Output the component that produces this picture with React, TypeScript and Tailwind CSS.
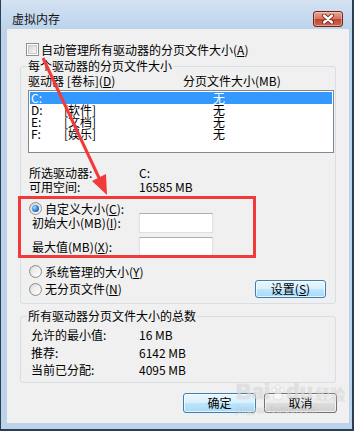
import React from 'react';

const font = "font-['Noto_Sans_CJK_SC',sans-serif]";

function Key({ k }: { k: string }) {
    return <span>(<span className="underline underline-offset-1">{k}</span>)</span>;
}

function Checkbox() {
    return (
        <span className="flex h-[13px] w-[13px] shrink-0 items-center justify-center border border-[#8e8f8f] bg-white">
            <span className="h-[9px] w-[9px] border border-[#c9c9c9] bg-linear-to-br from-[#d6d6d6] to-[#f8f8f8]" />
        </span>
    );
}

function Radio({ checked }: { checked?: boolean }) {
    return (
        <span className="flex h-[13px] w-[13px] shrink-0 items-center justify-center rounded-full border border-[#8e8f8f] bg-linear-to-br from-[#d2d2d2] to-[#fbfbfb]">
            {checked ? (
                <span className="h-[7px] w-[7px] rounded-full bg-[radial-gradient(circle_at_35%_35%,#a9dcff,#2b7bd2_55%,#143f78)]" />
            ) : (
                <span className="h-[9px] w-[9px] rounded-full bg-linear-to-br from-[#e2e2e2] to-white" />
            )}
        </span>
    );
}

function WinButton({ children, blue, className }: { children: React.ReactNode; blue?: boolean; className?: string }) {
    return (
        <div
            className={
                'flex items-center justify-center rounded-[3px] border ' +
                (blue
                    ? 'border-[#3c7fb1] bg-[linear-gradient(#eaf6fd_0%,#d9f0fc_49%,#bee6fd_50%,#a7d9f5_100%)] shadow-[inset_0_0_0_1px_rgba(255,255,255,0.7)] '
                    : 'border-[#707070] bg-[linear-gradient(#f2f2f2_0%,#ebebeb_49%,#dddddd_50%,#cfcfcf_100%)] shadow-[inset_0_0_0_1px_rgba(255,255,255,0.7)] ') +
                (className ?? '')
            }
        >
            {children}
        </div>
    );
}

function TextBox() {
    return <div className="h-[20px] w-[74px] border border-[#dbe1e8] border-t-[#abadb3] bg-white" />;
}

const drives = [
    { d: 'C:', label: '', sel: true },
    { d: 'D:', label: '[软件]' },
    { d: 'E:', label: '[文档]' },
    { d: 'F:', label: '[娱乐]' },
];

export default function App() {
    return (
        <div className={'relative flex h-[431px] w-[354px] flex-col overflow-hidden border-b-2 border-l border-r-2 border-[#2c3e52] bg-[#bcd3eb] text-black ' + font}>
            {/* title bar */}
            <div className="flex h-[29px] shrink-0 items-start bg-linear-to-b from-[#d4e2f2] to-[#bcd3eb] pl-[11px] pr-[9px] pt-[11px]">
                <span className="mt-[1px] text-[12px] leading-[14px] text-[#111]">虚拟内存</span>
                <div className="ml-auto flex h-[16px] w-[30px] items-center justify-center rounded-[3px] border border-[#6e2416] bg-[linear-gradient(#eaa594_0%,#d87560_48%,#c2432b_52%,#cf6a52_100%)] shadow-[inset_0_0_0_1px_rgba(255,255,255,0.35)]">
                    <svg width="14" height="10" viewBox="0 0 14 10">
                        <path d="M3 1.5 L11 8.5 M11 1.5 L3 8.5" stroke="#5a1a10" strokeWidth="4" strokeLinecap="round" />
                        <path d="M3 1.5 L11 8.5 M11 1.5 L3 8.5" stroke="#ffffff" strokeWidth="2.4" strokeLinecap="round" />
                    </svg>
                </div>
            </div>

            {/* client */}
            <div className="ml-[6px] mr-[3px] flex h-[394px] flex-col bg-[#f0f0f0] text-[12px] leading-[12px]">
                <div className="ml-[19px] mt-[14px] flex h-[13px] items-center gap-[2px]">
                    <Checkbox />
                    <span>自动管理所有驱动器的分页文件大小<Key k="A" /></span>
                </div>

                <div className="mx-[13px] mt-[10px] flex flex-col rounded-[3px] border border-[#d5dfe5] pb-[5px]">
                    <span className="-mt-[7px] ml-[6px] h-[12px] self-start bg-[#f0f0f0] px-[1px]">每个驱动器的分页文件大小</span>
                    <div className="mt-[3px] flex h-[12px] pl-[7px]">
                        <span className="w-[155px]">驱动器 [卷标]<Key k="D" /></span>
                        <span>分页文件大小(MB)</span>
                    </div>
                    <div className="ml-[7px] mt-[3px] h-[63px] w-[306px] border border-[#828790] bg-white p-[1px]">
                        {drives.map((r) => (
                            <div key={r.d} className={'flex h-[12px] ' + (r.sel ? 'bg-[#3399ff] text-white' : '')}>
                                <span className="w-[34px] pl-[1px]">{r.d}</span>
                                <span className="w-[149px]">{r.label}</span>
                                <span>无</span>
                            </div>
                        ))}
                    </div>
                    <div className="mt-[14px] flex h-[12px] pl-[8px]">
                        <span className="w-[110px]">所选驱动器:</span>
                        <span>C:</span>
                    </div>
                    <div className="mt-[2px] flex h-[12px] pl-[8px]">
                        <span className="w-[110px]">可用空间:</span>
                        <span>16585 MB</span>
                    </div>
                    <div className="mt-[9px] flex h-[13px] items-center gap-[3px] pl-[8px]">
                        <Radio checked />
                        <span>自定义大小<Key k="C" />:</span>
                    </div>
                    <div className="-mt-[2px] flex h-[20px] items-center pl-[11px]">
                        <span className="w-[107px]">初始大小(MB)<Key k="I" />:</span>
                        <TextBox />
                    </div>
                    <div className="mt-[4px] flex h-[20px] items-center pl-[11px]">
                        <span className="w-[107px]">最大值(MB)<Key k="X" />:</span>
                        <TextBox />
                    </div>
                    <div className="mt-[8px] flex h-[13px] items-center gap-[3px] pl-[8px]">
                        <Radio />
                        <span>系统管理的大小<Key k="Y" /></span>
                    </div>
                    <div className="mt-[2px] flex h-[18px] items-center gap-[3px] pl-[8px] pr-[9px]">
                        <Radio />
                        <span>无分页文件<Key k="N" /></span>
                        <WinButton blue className="ml-auto h-[18px] w-[71px]">
                            <span>设置<Key k="S" /></span>
                        </WinButton>
                    </div>
                </div>

                <div className="mx-[13px] mt-[12px] flex flex-col rounded-[3px] border border-[#d5dfe5] pb-[6px]">
                    <span className="-mt-[7px] ml-[6px] h-[12px] self-start bg-[#f0f0f0] px-[1px]">所有驱动器分页文件大小的总数</span>
                    <div className="mt-[7px] flex h-[12px] pl-[10px]">
                        <span className="w-[108px]">允许的最小值:</span>
                        <span>16 MB</span>
                    </div>
                    <div className="mt-[6px] flex h-[12px] pl-[10px]">
                        <span className="w-[108px]">推荐:</span>
                        <span>6142 MB</span>
                    </div>
                    <div className="mt-[5px] flex h-[12px] pl-[10px]">
                        <span className="w-[108px]">当前已分配:</span>
                        <span>4095 MB</span>
                    </div>
                </div>

                <div className="mt-[10px] flex h-[20px] justify-end gap-[8px] pr-[12px]">
                    <WinButton blue className="h-[20px] w-[73px]">确定</WinButton>
                    <WinButton className="h-[20px] w-[73px]">取消</WinButton>
                </div>
            </div>

            {/* watermark */}
            <div className="pointer-events-none absolute left-[235px] top-[381px] flex flex-col items-start text-white/60 opacity-80 [text-shadow:0_0_1px_rgba(120,120,120,0.6)]">
                <div className="flex items-end font-['Liberation_Sans',sans-serif] text-[22px] font-bold leading-[22px]">
                    <span>Bai</span>
                    <svg width="16" height="18" viewBox="0 0 16 18" className="mb-[1px] opacity-70">
                        <circle cx="4" cy="6" r="2.2" fill="#fff" stroke="#bbb" strokeWidth="0.6" />
                        <circle cx="8" cy="3" r="2.2" fill="#fff" stroke="#bbb" strokeWidth="0.6" />
                        <circle cx="12" cy="6" r="2.2" fill="#fff" stroke="#bbb" strokeWidth="0.6" />
                        <ellipse cx="8" cy="12" rx="4.5" ry="4" fill="#fff" stroke="#bbb" strokeWidth="0.6" />
                    </svg>
                    <span>du</span>
                    <span className="ml-[2px] font-['Noto_Sans_CJK_SC',sans-serif] text-[15px] font-normal leading-[18px]">经验</span>
                </div>
                <span className="mt-[3px] font-['Liberation_Sans',sans-serif] text-[9px] leading-[9px] tracking-[0.5px]">jingyan.baidu.com</span>
            </div>

            {/* annotation */}
            <svg className="pointer-events-none absolute -left-px top-0 h-[431px] w-[354px]" viewBox="0 0 354 431">
                <rect x="19.5" y="197.5" width="235" height="59" fill="none" stroke="#f23a3a" strokeWidth="3" />
                <line x1="43" y1="58" x2="100" y2="180" stroke="#f23a3a" strokeWidth="3" />
                <polygon points="107,195 106,174 92,181" fill="#f23a3a" />
            </svg>
        </div>
    );
}
